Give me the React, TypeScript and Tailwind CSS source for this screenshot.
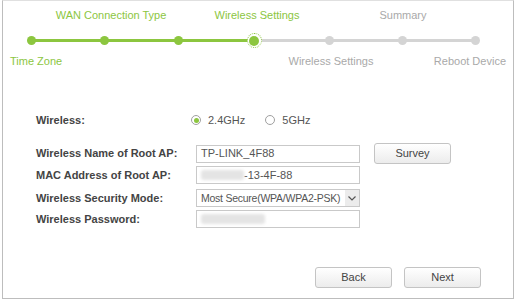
const steps = [
  { x: 30, done: true },
  { x: 103, done: true },
  { x: 177, done: true },
  { x: 253, current: true },
  { x: 328 },
  { x: 401 },
  { x: 474 },
];

const Radio = ({ checked, label }: { checked?: boolean; label: string }) => (
  <label className="flex items-center gap-[7px]">
    <span className="flex h-[10px] w-[10px] items-center justify-center rounded-full border border-[#a0a0a0] bg-white">
      {checked && <span className="h-[5px] w-[5px] rounded-full bg-[#8cc63f]" />}
    </span>
    <span>{label}</span>
  </label>
);

const Field = ({ children }: { children?: React.ReactNode }) => (
  <div className="flex h-[18px] w-[164px] items-center border border-[#c9c9c9] bg-white px-[4px] text-[#555]">
    {children}
  </div>
);

const Blur = ({ w }: { w: number }) => (
  <span className="inline-block h-[10px] rounded-[3px] bg-[#e4e4e4] blur-[1.5px]" style={{ width: w }} />
);

const Btn = ({ label }: { label: string }) => (
  <button className="h-[21px] w-[77px] rounded-[3px] border border-[#c4c4c4] bg-gradient-to-b from-white to-[#ececec] text-[#444]">
    {label}
  </button>
);

export default function App() {
  return (
    <div className="h-[304px] w-[516px] bg-white pl-[2px] text-[11px] leading-none" style={{ fontFamily: '"Liberation Sans", Arial, sans-serif' }}>
      <div className="h-[299px] w-[512px] border-b border-l border-r border-[#bdbdbd] border-t border-t-[#e0e0e0]">
        {/* progress */}
        <div className="relative h-[80px]">
          <div className="absolute left-[28px] right-[38px] top-[38px] h-[3px] bg-[#d4d4d4]" />
          <div className="absolute left-[28px] top-[38px] h-[3px] w-[225px] bg-[#8cc63f]" />
          {steps.map((s, i) =>
            s.current ? (
              <div key={i} className="absolute top-[32px] flex h-[15px] w-[15px] items-center justify-center rounded-full border border-dotted border-[#8cc63f] bg-white" style={{ left: s.x - 2 - 7.5 }}>
                <span className="h-[10px] w-[10px] rounded-full bg-[#8cc63f]" />
              </div>
            ) : (
              <span key={i} className={`absolute top-[35px] h-[9px] w-[9px] rounded-full ${s.done ? "bg-[#8cc63f]" : "bg-[#d4d4d4]"}`} style={{ left: s.x - 2 - 4.5 }} />
            )
          )}
          <span className="absolute top-[9px] -translate-x-1/2 text-[#8cc63f]" style={{ left: 108 }}>WAN Connection Type</span>
          <span className="absolute top-[9px] -translate-x-1/2 text-[#8cc63f]" style={{ left: 254 }}>Wireless Settings</span>
          <span className="absolute top-[9px] -translate-x-1/2 text-[#a9a9a9]" style={{ left: 400 }}>Summary</span>
          <span className="absolute left-[7px] top-[55px] text-[#8cc63f]">Time Zone</span>
          <span className="absolute top-[55px] -translate-x-1/2 text-[#a9a9a9]" style={{ left: 328 }}>Wireless Settings</span>
          <span className="absolute right-[7px] top-[55px] text-[#a9a9a9]">Reboot Device</span>
        </div>

        {/* form */}
        <div className="pl-[33px] pt-[33px] text-[#444]">
          <div className="flex h-[12px] items-center">
            <span className="w-[155px] font-bold">Wireless:</span>
            <div className="flex gap-[20px] text-[#555]">
              <Radio checked label="2.4GHz" />
              <Radio label="5GHz" />
            </div>
          </div>
          <div className="mt-[17px] flex items-center">
            <span className="w-[160px] font-bold">Wireless Name of Root AP:</span>
            <Field>TP-LINK_4F88</Field>
            <div className="ml-[14px]">
              <Btn label="Survey" />
            </div>
          </div>
          <div className="mt-[2px] flex items-center">
            <span className="w-[160px] font-bold">MAC Address of Root AP:</span>
            <Field>
              <Blur w={43} />
              <span>-13-4F-88</span>
            </Field>
          </div>
          <div className="mt-[5px] flex items-center">
            <span className="w-[160px] font-bold">Wireless Security Mode:</span>
            <div className="flex h-[18px] w-[164px] items-center justify-between border border-[#c9c9c9] bg-white pl-[4px] text-[#555]">
              <span className="whitespace-nowrap text-[10.5px] tracking-[-0.25px]">Most Secure(WPA/WPA2-PSK)</span>
              <span className="flex h-[16px] w-[14px] shrink-0 items-center justify-center bg-[#ececec]">
                <svg width="8" height="5" viewBox="0 0 8 5" fill="none" stroke="#555" strokeWidth="1.2">
                  <path d="M0.5 0.5 L4 4 L7.5 0.5" />
                </svg>
              </span>
            </div>
          </div>
          <div className="mt-[3px] flex items-center">
            <span className="w-[160px] font-bold">Wireless Password:</span>
            <Field>
              <Blur w={64} />
            </Field>
          </div>
        </div>

        <div className="mt-[39px] flex justify-end gap-[12px] pr-[32px]">
          <Btn label="Back" />
          <Btn label="Next" />
        </div>
      </div>
    </div>
  );
}
